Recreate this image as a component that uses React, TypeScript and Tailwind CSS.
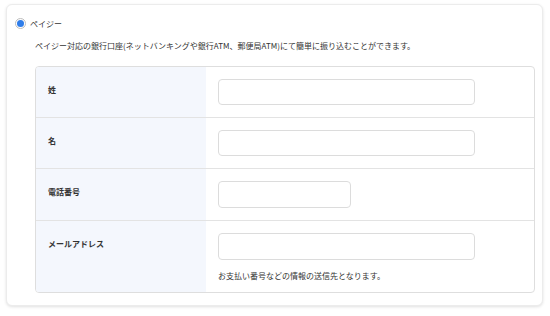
import React from "react";

const font = { fontFamily: '"Noto Sans CJK JP", "Noto Sans", sans-serif' };

function Row({
  label,
  children,
  last,
}: {
  label: string;
  children: React.ReactNode;
  last?: boolean;
}) {
  return (
    <div className={`flex ${last ? "" : "border-b border-[#e3e3e3]"}`}>
      <div className="w-[170px] shrink-0 bg-[#f4f7fd] pl-[12px] pt-[12px]">
        <div className="h-[21px] flex items-center text-[8px] font-bold text-[#333]">{label}</div>
      </div>
      <div className={`flex-1 pl-[12px] pt-[12px] ${last ? "pb-[10px]" : "pb-[12px]"}`}>{children}</div>
    </div>
  );
}

export default function App() {
  return (
    <div className="w-[550px] h-[316px] bg-white pt-[4px] pl-[6px]" style={font}>
      <div className="w-[537px] h-[302px] rounded-[6px] border border-[#ececec] bg-white shadow-[0_1px_3px_rgba(0,0,0,0.12)] pt-[13px] pl-[8px]">
        <div className="flex items-center h-[11px]">
          <div className="w-[11px] h-[11px] rounded-full border border-[#bdbdbd] bg-white flex items-center justify-center">
            <div className="w-[7px] h-[7px] rounded-full bg-[#2f7de9]" />
          </div>
          <span className="ml-[4px] text-[8px] leading-[12px] text-[#333]">ペイジー</span>
        </div>
        <div className="ml-[20px] mt-[11px] text-[8px] leading-[12px] text-[#333]">
          ペイジー対応の銀行口座(ネットバンキングや銀行ATM、郵便局ATM)にて簡単に振り込むことができます。
        </div>
        <div className="ml-[20px] mt-[14px] w-[500px] rounded-[4px] border border-[#dedede] overflow-hidden">
          <Row label="姓">
            <div className="w-[257px] h-[26px] rounded-[4px] border border-[#dcdcdc] bg-white" />
          </Row>
          <Row label="名">
            <div className="w-[257px] h-[26px] rounded-[4px] border border-[#dcdcdc] bg-white" />
          </Row>
          <Row label="電話番号">
            <div className="w-[133px] h-[27px] rounded-[4px] border border-[#dcdcdc] bg-white" />
          </Row>
          <Row label="メールアドレス" last>
            <div className="w-[257px] h-[27px] rounded-[4px] border border-[#dcdcdc] bg-white" />
            <div className="mt-[10px] text-[8px] leading-[12px] text-[#333]">
              お支払い番号などの情報の送信先となります。
            </div>
          </Row>
        </div>
      </div>
    </div>
  );
}
